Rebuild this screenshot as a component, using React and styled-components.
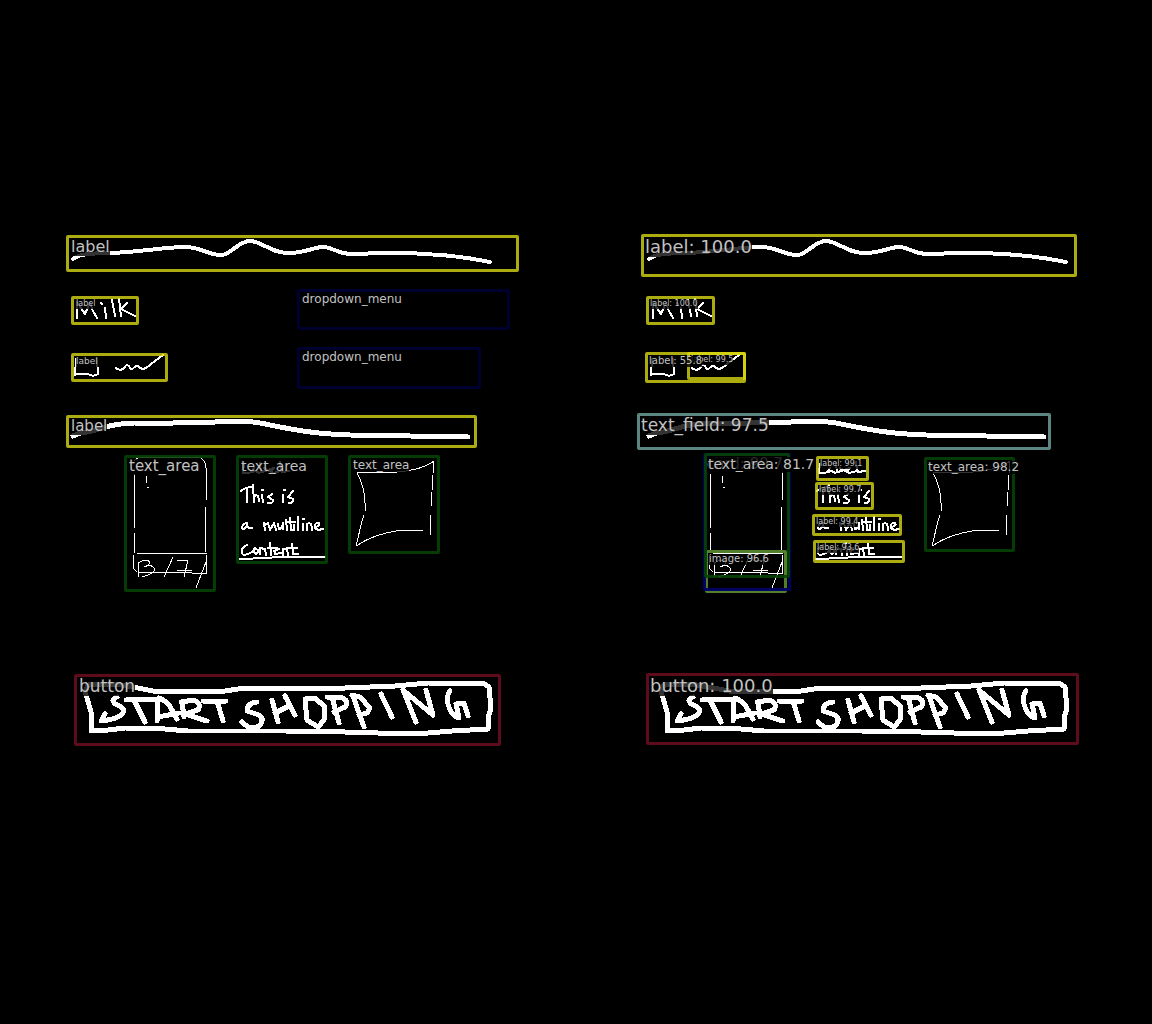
import React from "react";
import styled, { createGlobalStyle } from "styled-components";

const GlobalStyle = createGlobalStyle`
  *, *::before, *::after { box-sizing: border-box; }
  body { margin: 0; background: #000; font-family: "DejaVu Sans", sans-serif; }
`;

/* Size of the sketch's own coordinate system. */
const SKETCH_W = 576;
const SKETCH_H = 1024;

const colors = {
  label: "rgba(220, 220, 20, 0.78)",
  dropdown: "#00002e",
  textArea: "rgba(4, 66, 4, 0.9)",
  textField: "#5c8681",
  button: "#5e0c1c",
  card: "rgba(0, 0, 104, 0.95)",
  image: "#527f2c",
};

const Comparison = styled.main`
  display: grid;
  grid-template-columns: 1fr 1fr;
  background: #000;
`;

const Canvas = styled.section`
  position: relative;
  aspect-ratio: 9 / 16;
`;

const Drawing = styled.svg`
  display: block;
  width: 100%;
  height: 100%;
  fill: none;
  stroke: #fff;
  stroke-linejoin: round;
  stroke-linecap: round;
  shape-rendering: crispEdges;
`;

const Region = styled.div`
  position: absolute;
  left: ${(p) => (p.$x / SKETCH_W) * 100}%;
  top: ${(p) => (p.$y / SKETCH_H) * 100}%;
  width: ${(p) => (p.$w / SKETCH_W) * 100}%;
  height: ${(p) => (p.$h / SKETCH_H) * 100}%;
  display: flex;
  align-items: flex-start;
  padding: 1px 0 0 ${(p) => p.$inset}px;
  border: 3px solid ${(p) => p.$color};
  border-radius: 2px;
`;

const Tag = styled.span`
  flex: none;
  padding-bottom: 1px;
  background: rgba(0, 0, 0, 0.8);
  color: #c2c2c2;
  font-size: ${(p) => p.$size}px;
  line-height: 1;
  white-space: nowrap;
`;

const truth = [
  { text: "label", kind: "label", box: [66, 235, 453, 37], size: 16 },
  { text: "label", kind: "label", box: [71, 296, 68, 29], size: 8 },
  { text: "dropdown_menu", kind: "dropdown", box: [297, 289, 213, 41], size: 12 },
  { text: "label", kind: "label", box: [71, 353, 97, 29], size: 9 },
  { text: "dropdown_menu", kind: "dropdown", box: [297, 347, 184, 42], size: 12 },
  { text: "label", kind: "label", box: [66, 415, 411, 33], size: 15 },
  { text: "text_area", kind: "textArea", box: [124, 455, 92, 137], size: 15 },
  { text: "text_area", kind: "textArea", box: [236, 455, 92, 109], size: 14 },
  { text: "text_area", kind: "textArea", box: [348, 455, 92, 99], size: 12 },
  { text: "button", kind: "button", box: [74, 674, 427, 72], size: 17 },
];

const predicted = [
  { text: "label: 100.0", kind: "label", box: [65, 234, 436, 43], size: 18 },
  { text: "label: 100.0", kind: "label", box: [70, 296, 69, 29], size: 8 },
  { text: "label: 99.5", kind: "label", box: [111, 352, 59, 28], size: 8 },
  { text: "label: 55.8", kind: "label", box: [69, 352, 101, 31], size: 10 },
  { text: "text_field: 97.5", kind: "textField", box: [61, 413, 414, 37], size: 17 },
  { text: "image: 96.6", kind: "image", box: [129, 550, 82, 43], size: 10 },
  { text: "card: 99.7", kind: "card", box: [127, 453, 88, 138], size: 15 },
  { text: "text_area: 81.7", kind: "textArea", box: [128, 453, 86, 125], size: 14 },
  { text: "label: 99.1", kind: "label", box: [240, 456, 53, 25], size: 8 },
  { text: "label: 99.7", kind: "label", box: [239, 482, 59, 28], size: 8 },
  { text: "label: 99.4", kind: "label", box: [236, 514, 90, 22], size: 8 },
  { text: "label: 93.6", kind: "label", box: [237, 540, 92, 23], size: 8 },
  { text: "text_area: 98.2", kind: "textArea", box: [348, 457, 91, 95], size: 12 },
  { text: "button: 100.0", kind: "button", box: [70, 673, 433, 72], size: 18 },
];

function Sketch() {
  return (
    <Drawing viewBox={`0 0 ${SKETCH_W} ${SKETCH_H}`} aria-hidden="true">
      {/* headline scribble */}
      <path
        strokeWidth="4"
        d="M73 259L78 256C88 253 100 253 111 253C140 252 165 247 186 247C200 247 208 255 221 255C231 255 238 241 250 241C262 241 270 253 289 253C305 253 314 247 323 247C333 247 338 255 355 254C380 253 400 252 425 254C450 255 475 259 490 262"
      />
      {/* second scribble */}
      <path
        strokeWidth="5"
        d="M73 436L80 433C98 432 106 423 134 423C170 424 195 422 215 422C235 421 250 420 270 425C295 430 315 434 350 435L410 436L468 437"
      />
      {/* Milk */}
      <g strokeWidth="2">
        <path d="M77 318V302L85 314L90 303L93 311L97 318" />
        <path d="M101 303L102 304M105 308L106 318M112 300L115 316M119 299L121 316M127 303L121 309L135 316" />
      </g>
      {/* tick box and squiggle */}
      <g strokeWidth="2">
        <path d="M76 359L75 375M77 374H88L93 376L98 374L97 359" />
        <path d="M116 368C119 371 123 370 125 367C127 363 129 366 131 369C133 370 135 365 138 366C140 368 142 370 146 368L155 361L163 355" />
      </g>
      {/* card with date */}
      <g strokeWidth="1">
        <path d="M134 461L138 458L163 457H198Q205 458 206 468V500M205 507V552M134 473L135 528M134 533V553" />
        <path d="M133 555V568L137 572L192 573L207 574L206 555M137 553L150 554L208 553" />
        <path d="M138 562V577M138 563C146 558 151 561 149 564C148 566 146 567 144 567C152 563 158 569 152 573C149 575 146 577 142 576" />
        <path d="M173 557L164 577M177 561L188 560L184 577M177 571L192 570M206 562L196 588" />
        <path d="M146 476L147 483M147 487H149" />
      </g>
      {/* Label / This is / a multiline / Content */}
      <g strokeWidth="2">
        <path d="M244 464L243 473H249M254 468L251 472L256 471L259 473M260 463L261 472L266 471L264 468L271 472L274 468L270 469L273 473L281 471L280 462L282 472L289 471" />
        <path d="M241 491Q246 487 252 487M247 488V502M253 485L254 502M254 497Q258 492 259 501M262 495L263 502M262 490H263M272 494L268 497L273 500Q273 504 268 503M283 495V502M284 490H285M293 491L288 497L293 499Q293 503 289 503" />
        <path d="M247 523Q242 524 242 528Q244 531 247 525V523Q247 530 252 528M264 523L265 530M265 525L268 523L270 530L274 523L276 530M278 524L279 529L282 528L283 523V529M286 520L287 530M290 518L291 530L294 530V525M287 522H295M298 517V530M303 524V530M303 519H304M307 530V524Q312 521 312 530M315 527Q321 526 319 523Q314 522 315 528L318 530L323 529" />
        <path d="M247 545Q241 547 242 553Q243 557 252 552M255 548L253 551L256 554L259 551L255 548M260 554V548L265 549L266 555M270 543L271 555M268 548H274M274 551L279 549L276 548L275 554L281 553M283 555V549L287 549L288 555M292 544L293 554L298 554M287 548H297M240 559L267 558L277 557H325" />
      </g>
      {/* curved frame */}
      <path
        strokeWidth="1"
        d="M357 473C362 482 365 492 365 503V511M364 515L362 521L356 546C369 537 387 532 402 530H423M357 472H397Q422 470 434 461L433 473M433 475L432 490M432 492L431 506M430 515V535"
      />
      {/* START SHOPPING */}
      <path
        strokeWidth="5"
        d="M87 698L85 692L88 685L115 684L138 688L153 691H225L245 688H285L345 688L395 686L428 683L485 684L489 687L490 698L491 708L488 718V729L452 731L428 733H378L345 732L285 731H188L165 729L125 728L108 730L91 731V712L87 698"
      />
      <g strokeWidth="5">
        <path d="M117 697Q109 700 117 705Q126 708 123 713Q119 719 101 721L105 714" />
        <path d="M126 700L155 699M134 700L145 722" />
        <path d="M157 721V704L159 698Q169 702 172 710L177 719M158 717L179 713" />
        <path d="M182 702L184 717M181 702L194 700Q202 704 198 710L185 714L207 721" />
        <path d="M203 701H226M217 701L223 721" />
        <path d="M257 702Q247 703 247 711L259 715Q264 718 261 724Q256 730 248 727L242 722" />
        <path d="M272 700L278 722M275 713L289 706M285 696L295 715" />
        <path d="M305 699L315 698L325 707L324 720L318 727L307 720Z" />
        <path d="M327 697H340Q350 700 345 707L334 712M332 697L339 723" />
        <path d="M352 695L360 697L370 708L367 713L359 715M353 696L364 727" />
        <path d="M381 694L392 717" />
        <path d="M416 722L412 712L403 690L433 715L426 690" />
        <path d="M450 691Q446 696 448 704Q451 716 459 718L456 704L464 703L468 716" />
      </g>
    </Drawing>
  );
}

function AnnotatedSketch({ name, regions, inset }) {
  return (
    <Canvas aria-label={name}>
      <Sketch />
      {regions.map(({ text, kind, box: [x, y, w, h], size }, i) => (
        <Region key={i} $x={x} $y={y} $w={w} $h={h} $color={colors[kind]} $inset={inset}>
          <Tag $size={size}>{text}</Tag>
        </Region>
      ))}
    </Canvas>
  );
}

export default function App() {
  return (
    <>
      <GlobalStyle />
      <Comparison>
        <AnnotatedSketch name="Ground truth" regions={truth} inset={2} />
        <AnnotatedSketch name="Predictions" regions={predicted} inset={1} />
      </Comparison>
    </>
  );
}
